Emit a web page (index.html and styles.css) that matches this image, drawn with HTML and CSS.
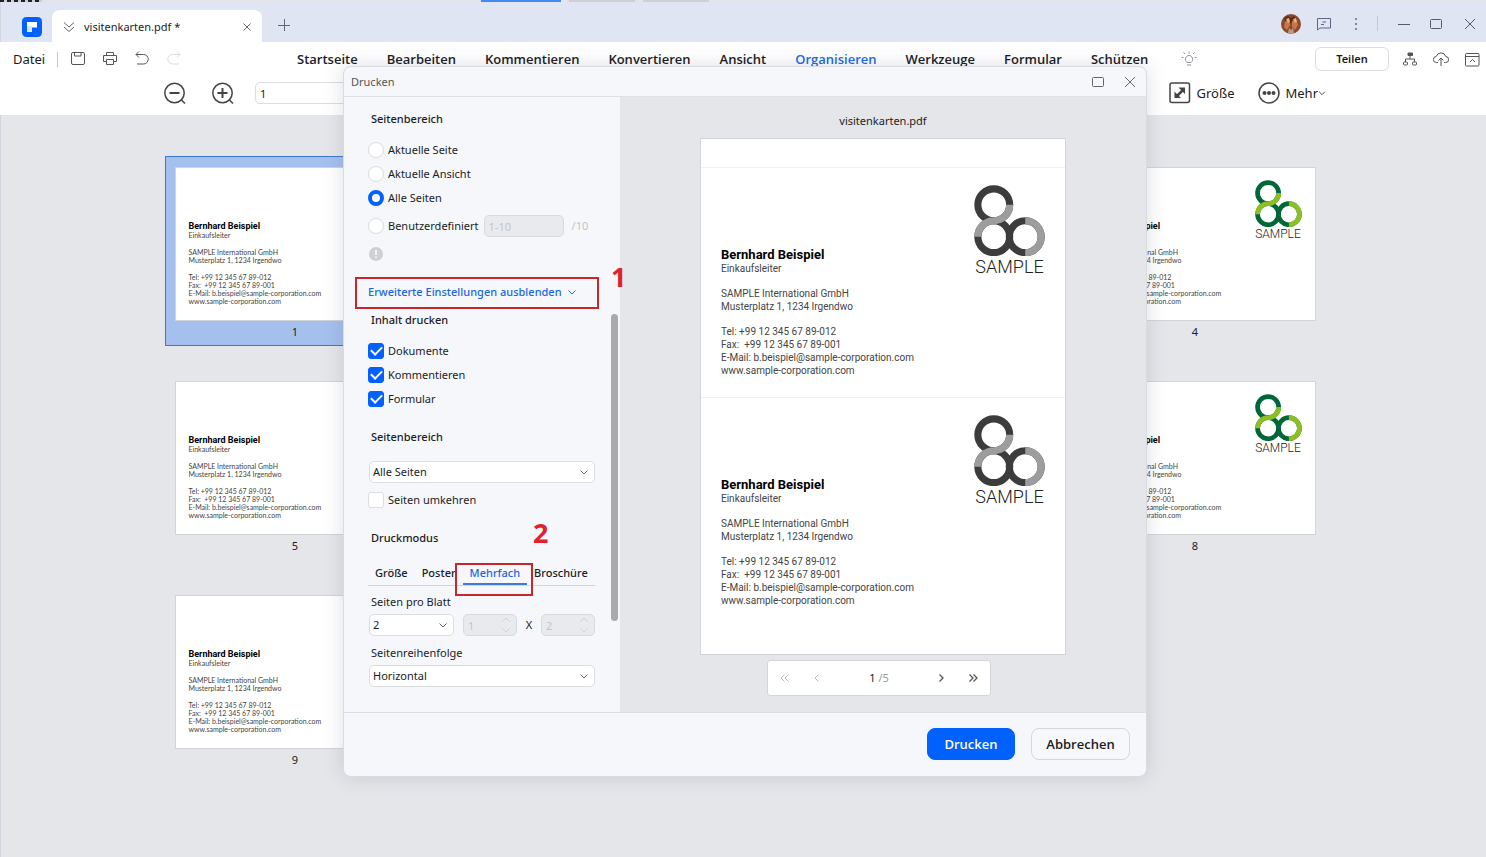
FILE: index.html
```html
<!DOCTYPE html>
<html lang="de">
<head>
<meta charset="utf-8">
<title>visitenkarten.pdf</title>
<link rel="stylesheet" href="styles.css">
</head>
<body>
<svg class="defs" width="0" height="0" aria-hidden="true">
  <defs>
    <symbol id="logo" viewBox="0 0 70 70">
      <g fill="none" stroke-width="7">
        <circle cx="19.500" cy="19.500" r="15.700" class="dark"/>
        <circle cx="19.500" cy="51" r="15.700" class="dark"/>
        <circle cx="50.500" cy="51" r="15.700" class="dark"/>
        <path class="light" d="M35.200 19.500a15.700 15.700 0 0 1-15.700 15.750a15.700 15.700 0 0 0-15.700 15.750"/>
        <path class="light" d="M50.500 35.300a15.700 15.700 0 0 1 0 31.400"/>
      </g>
    </symbol>
    <symbol id="chev" viewBox="0 0 10 10"><path d="M1.500 3.500 5 7l3.500-3.500" fill="none" stroke="currentColor"/></symbol>
    <symbol id="spin" viewBox="0 0 10 16"><path d="M1.500 4.500 5 1l3.500 3.500M1.500 11.500 5 15l3.500-3.500" fill="none" stroke="currentColor"/></symbol>
  </defs>
</svg>
<div class="app">
  <div class="behind"><span class="seg seg-text"></span><span class="seg seg-blue"></span><span class="seg seg-grey"></span><span class="seg seg-grey"></span></div>

  <header class="titlebar">
    <svg class="brand" viewBox="0 0 20 20"><rect width="20" height="20" rx="4.500" fill="#0061ff"/><path d="M5 5h10v5.500h-5V9H5z" fill="#fff"/><path d="M5 9h5v6H5z" fill="#d9e8ff"/></svg>
    <div class="tab">
      <svg width="12" height="12" viewBox="0 0 12 12" fill="none" stroke="#666"><path d="M1 1.500 6 6l5-4.500M1 6l5 4.500L11 6"/></svg>
      <span class="tab-name">visitenkarten.pdf *</span>
      <button class="icon-btn" aria-label="Tab schließen"><svg width="8" height="8" viewBox="0 0 8 8" stroke="#667"><path d="m.5.5 7 7m0-7-7 7"/></svg></button>
    </div>
    <button class="icon-btn new-tab" aria-label="Neuer Tab"><svg width="12" height="12" viewBox="0 0 12 12" stroke="#667"><path d="M0 6.500h12M6.500 0v12"/></svg></button>
    <div class="window-tools">
      <svg class="avatar" width="20" height="20" viewBox="0 0 20 20"><circle cx="10" cy="10" r="10" fill="#8b4a2c"/><path d="M3 4l4-2 3 2 3-2 3 3-2 3-4 1-5-1z" fill="#5a2a1d"/><path d="M4 8l4-3 1 6-3 5-3-3zM11 7l4-2 2 6-3 5-3-3z" fill="#c9764a"/><path d="M8 14l2 2 2-2 1 5-3 1-3-1z" fill="#b99c86"/><path d="M5 5l3-1 1 4-2 1zM12 5l3-1 1 4-2 1z" fill="#e9b07a"/></svg>
      <button class="icon-btn" aria-label="Feedback"><svg width="14" height="14" viewBox="0 0 14 14" fill="none" stroke="#626780"><path d="M.5 1.500h13v9.500H3L.5 13zM4 7.500h3M5.500 5H9"/></svg></button>
      <button class="icon-btn" aria-label="Menü"><svg width="4" height="14" viewBox="0 0 4 14" fill="#626780"><circle cx="2" cy="2" r="1"/><circle cx="2" cy="7" r="1"/><circle cx="2" cy="12" r="1"/></svg></button>
      <span class="rule"></span>
      <button class="icon-btn" aria-label="Minimieren"><svg width="12" height="12" viewBox="0 0 12 12" stroke="#555a70"><path d="M0 6.500h12"/></svg></button>
      <button class="icon-btn" aria-label="Maximieren"><svg width="12" height="12" viewBox="0 0 12 12" fill="none" stroke="#555a70"><rect x=".5" y="1.500" width="11" height="9" rx="1"/></svg></button>
      <button class="icon-btn close" aria-label="Schließen"><svg width="12" height="12" viewBox="0 0 12 12" stroke="#555a70"><path d="m1 1 10 10m0-10L1 11"/></svg></button>
    </div>
  </header>

  <nav class="menubar">
    <div class="quick">
      <a href="#" class="datei">Datei</a><span class="rule"></span>
      <button class="icon-btn" aria-label="Speichern"><svg width="16" height="16" viewBox="0 0 16 16" fill="none" stroke="#555"><rect x="1.500" y="1.500" width="13" height="12" rx="1.500"/><path d="M4.500 1.500V5H11V1.500"/></svg></button>
      <button class="icon-btn" aria-label="Drucken"><svg width="16" height="16" viewBox="0 0 16 16" fill="none" stroke="#555"><path d="M4.500 4.500v-3h7v3M4.500 10.500h-3v-6h13v6h-3M4.500 8.500h7v5h-7z"/></svg></button>
      <button class="icon-btn" aria-label="Rückgängig"><svg width="16" height="16" viewBox="0 0 16 16" fill="none" stroke="#555"><path d="M5 .5 2 3.500l3 3M2 3.500h7.500a4.700 4.700 0 0 1 0 9.500H3"/></svg></button>
      <button class="icon-btn" aria-label="Wiederholen"><svg width="16" height="16" viewBox="0 0 16 16" fill="none" stroke="#ddd"><path d="m11 .5 3 3-3 3M14 3.500H6.500a4.700 4.700 0 0 0 0 9.500H13"/></svg></button>
    </div>
    <div class="menus">
      <a href="#">Startseite</a><a href="#">Bearbeiten</a><a href="#">Kommentieren</a><a href="#">Konvertieren</a><a href="#">Ansicht</a><a href="#" class="active">Organisieren</a><a href="#">Werkzeuge</a><a href="#">Formular</a><a href="#">Schützen</a>
      <svg width="16" height="16" viewBox="0 0 16 16" fill="none" stroke="#8d92a3"><path d="M6 11.500C3 9 4.500 4.500 8 4.500s5 4.500 2 7zM6 14h4M8 .5v2M.5 6.500h2M13.500 6.500h2M2.500 1.500 4 3M13.500 1.500 12 3"/></svg>
    </div>
    <div class="share">
      <button class="teilen">Teilen</button>
      <button class="icon-btn" aria-label="Struktur"><svg width="14" height="14" viewBox="0 0 14 14" fill="none" stroke="#555"><path d="M5 1h4.500v2.500H5z" fill="#555"/><path d="M7 4v3M2.500 10V7h9v3"/><rect x=".5" y="10" width="4" height="3" rx="1"/><rect x="9.500" y="10" width="4" height="3" rx="1"/></svg></button>
      <button class="icon-btn" aria-label="Cloud"><svg width="16" height="16" viewBox="0 0 16 16" fill="none" stroke="#555"><path d="M5 11.500H3.500a3 3 0 0 1-.3-6 5 5 0 0 1 9.600 0 3 3 0 0 1-.3 6H11M8 15V7M5.500 9.500 8 7l2.500 2.500"/></svg></button>
      <button class="icon-btn" aria-label="Menüband einklappen"><svg width="15" height="15" viewBox="0 0 15 15" fill="none" stroke="#555"><rect x=".5" y="1.500" width="13.500" height="12.500" rx="1"/><path d="M.5 4.500H14M5 10l2.500-2.500L10 10"/></svg></button>
    </div>
  </nav>

  <div class="toolbar">
    <div class="tools-left">
      <button class="icon-btn" aria-label="Verkleinern"><svg width="24" height="24" viewBox="0 0 24 24" fill="none" stroke="#444" stroke-width="1.500"><circle cx="11.500" cy="12" r="9.700"/><path d="m18.500 19 3.500 3.500"/><path d="M6.500 12h10" stroke-width="2"/></svg></button>
      <button class="icon-btn" aria-label="Vergrößern"><svg width="24" height="24" viewBox="0 0 24 24" fill="none" stroke="#444" stroke-width="1.500"><circle cx="11.500" cy="12" r="9.700"/><path d="m18.500 19 3.500 3.500"/><path d="M6.500 12h10M11.500 7v10" stroke-width="2"/></svg></button>
      <input class="page-input" value="1" aria-label="Seite">
    </div>
    <div class="tools-right">
      <button class="tool"><svg width="22" height="22" viewBox="0 0 22 22" fill="none" stroke="#444" stroke-width="1.500"><rect x="1" y="1" width="19.500" height="19.500" rx="2"/><path d="m8 14 6-6" stroke-width="2.500"/><path d="M9.500 5.500H16V12zM5.500 9.500V16H12z" fill="#444" stroke="none"/></svg>Größe</button>
      <button class="tool"><svg width="22" height="22" viewBox="0 0 22 22" fill="none" stroke="#444" stroke-width="1.500"><circle cx="11" cy="11" r="10"/><g fill="#444" stroke="none"><circle cx="6.500" cy="11" r="2"/><circle cx="11" cy="11" r="2"/><circle cx="15.500" cy="11" r="2"/></g></svg><span>Mehr<svg class="mini" width="8" height="8"><use href="#chev"/></svg></span></button>
    </div>
  </div>

  <main class="workspace">
    <ul class="pages">
      <li class="page selected"><div class="card"><div class="card-text"><p><b>Bernhard Beispiel</b><br>Einkaufsleiter</p><p>SAMPLE International GmbH<br>Musterplatz 1, 1234 Irgendwo</p><p>Tel: +99 12 345 67 89-012<br>Fax:&nbsp; +99 12 345 67 89-001<br>E-Mail: b.beispiel@sample-corporation.com<br>www.sample-corporation.com</p></div></div>1</li>
      <li class="page last"><div class="card"><div class="card-text"><p><b>Bernhard Beispiel</b><br>Einkaufsleiter</p><p>SAMPLE International GmbH<br>Musterplatz 1, 1234 Irgendwo</p><p>Tel: +99 12 345 67 89-012<br>Fax:&nbsp; +99 12 345 67 89-001<br>E-Mail: b.beispiel@sample-corporation.com<br>www.sample-corporation.com</p></div><div class="card-logo"><svg class="green"><use href="#logo"/></svg>SAMPLE</div></div>4</li>
      <li class="page"><div class="card"><div class="card-text"><p><b>Bernhard Beispiel</b><br>Einkaufsleiter</p><p>SAMPLE International GmbH<br>Musterplatz 1, 1234 Irgendwo</p><p>Tel: +99 12 345 67 89-012<br>Fax:&nbsp; +99 12 345 67 89-001<br>E-Mail: b.beispiel@sample-corporation.com<br>www.sample-corporation.com</p></div></div>5</li>
      <li class="page last"><div class="card"><div class="card-text"><p><b>Bernhard Beispiel</b><br>Einkaufsleiter</p><p>SAMPLE International GmbH<br>Musterplatz 1, 1234 Irgendwo</p><p>Tel: +99 12 345 67 89-012<br>Fax:&nbsp; +99 12 345 67 89-001<br>E-Mail: b.beispiel@sample-corporation.com<br>www.sample-corporation.com</p></div><div class="card-logo"><svg class="green"><use href="#logo"/></svg>SAMPLE</div></div>8</li>
      <li class="page"><div class="card"><div class="card-text"><p><b>Bernhard Beispiel</b><br>Einkaufsleiter</p><p>SAMPLE International GmbH<br>Musterplatz 1, 1234 Irgendwo</p><p>Tel: +99 12 345 67 89-012<br>Fax:&nbsp; +99 12 345 67 89-001<br>E-Mail: b.beispiel@sample-corporation.com<br>www.sample-corporation.com</p></div></div>9</li>
    </ul>
  </main>

  <div class="overlay">
    <section class="dialog" role="dialog" aria-label="Drucken">
      <div class="dialog-title">
        <span>Drucken</span>
        <button class="icon-btn" aria-label="Maximieren"><svg width="12" height="12" viewBox="0 0 12 12" fill="none" stroke="#666"><rect x=".5" y="1.500" width="11" height="9" rx="1"/></svg></button>
        <button class="icon-btn" aria-label="Schließen"><svg width="12" height="12" viewBox="0 0 12 12" stroke="#666"><path d="m1 1 10 10m0-10L1 11"/></svg></button>
      </div>
      <div class="dialog-body">
        <form class="settings">
          <h3>Seitenbereich</h3>
          <div class="choices">
            <label class="choice"><input type="radio" name="r">Aktuelle Seite</label>
            <label class="choice"><input type="radio" name="r">Aktuelle Ansicht</label>
            <label class="choice"><input type="radio" name="r" checked>Alle Seiten</label>
          </div>
          <div class="custom">
            <label class="choice"><input type="radio" name="r">Benutzerdefiniert</label>
            <input class="field range" placeholder="1-10" disabled aria-label="Bereich"><span>/10</span>
          </div>
          <div class="info"><svg width="14" height="14" viewBox="0 0 14 14"><circle cx="7" cy="7" r="7" fill="#cfd0d3"/><path d="M7 3v5M7 9.500v1.500" stroke="#fff" stroke-width="1.500"/></svg></div>
          <a href="#" class="advanced">Erweiterte Einstellungen ausblenden<svg width="10" height="10"><use href="#chev"/></svg></a>
          <h3 class="tight">Inhalt drucken</h3>
          <div class="choices">
            <label class="choice"><input type="checkbox" checked>Dokumente</label>
            <label class="choice"><input type="checkbox" checked>Kommentieren</label>
            <label class="choice"><input type="checkbox" checked>Formular</label>
          </div>
          <h3>Seitenbereich</h3>
          <div class="select first"><select aria-label="Seitenbereich"><option>Alle Seiten</option></select><svg width="10" height="10"><use href="#chev"/></svg></div>
          <label class="choice reverse"><input type="checkbox">Seiten umkehren</label>
          <h3>Druckmodus</h3>
          <div class="modes"><button type="button">Größe</button><button type="button">Poster</button><button type="button" class="on">Mehrfach</button><button type="button">Broschüre</button></div>
          <label class="caption" for="per">Seiten pro Blatt</label>
          <div class="sheet">
            <div class="select"><select id="per"><option>2</option></select><svg width="10" height="10"><use href="#chev"/></svg></div>
            <div class="select off"><input class="field" value="1" disabled aria-label="Spalten"><svg width="10" height="16"><use href="#spin"/></svg></div>
            <span>X</span>
            <div class="select off"><input class="field" value="2" disabled aria-label="Zeilen"><svg width="10" height="16"><use href="#spin"/></svg></div>
          </div>
          <label class="caption order" for="order">Seitenreihenfolge</label>
          <div class="select"><select id="order"><option>Horizontal</option></select><svg width="10" height="10"><use href="#chev"/></svg></div>
          <span class="scroll-thumb"></span>
        </form>
        <div class="preview">
          <div class="file">visitenkarten.pdf</div>
          <div class="sheet-preview">
            <div class="big"><div class="card-text"><p><b>Bernhard Beispiel</b><br>Einkaufsleiter</p><p>SAMPLE International GmbH<br>Musterplatz 1, 1234 Irgendwo</p><p>Tel: +99 12 345 67 89-012<br>Fax:&nbsp; +99 12 345 67 89-001<br>E-Mail: b.beispiel@sample-corporation.com<br>www.sample-corporation.com</p></div><div class="card-logo"><svg class="gray"><use href="#logo"/></svg>SAMPLE</div></div>
            <div class="big"><div class="card-text"><p><b>Bernhard Beispiel</b><br>Einkaufsleiter</p><p>SAMPLE International GmbH<br>Musterplatz 1, 1234 Irgendwo</p><p>Tel: +99 12 345 67 89-012<br>Fax:&nbsp; +99 12 345 67 89-001<br>E-Mail: b.beispiel@sample-corporation.com<br>www.sample-corporation.com</p></div><div class="card-logo"><svg class="gray"><use href="#logo"/></svg>SAMPLE</div></div>
          </div>
          <div class="pager">
            <button class="icon-btn" aria-label="Erste"><svg width="10" height="10" viewBox="0 0 10 10" fill="none" stroke="#bbb"><path d="M4.500 1.500 1 5l3.500 3.500M8.500 1.500 5 5l3.500 3.500"/></svg></button>
            <button class="icon-btn" aria-label="Zurück"><svg width="10" height="10" viewBox="0 0 10 10" fill="none" stroke="#bbb"><path d="M6.500 1.500 3 5l3.500 3.500"/></svg></button>
            <span class="count">1 <i>/5</i></span>
            <button class="icon-btn" aria-label="Weiter"><svg width="10" height="10" viewBox="0 0 10 10" fill="none" stroke="#555" stroke-width="1.300"><path d="M3.500 1.500 7 5 3.500 8.500"/></svg></button>
            <button class="icon-btn" aria-label="Letzte"><svg width="10" height="10" viewBox="0 0 10 10" fill="none" stroke="#555" stroke-width="1.300"><path d="M1.500 1.500 5 5 1.500 8.500M5.500 1.500 9 5 5.500 8.500"/></svg></button>
          </div>
        </div>
      </div>
      <div class="dialog-foot"><button class="btn primary">Drucken</button><button class="btn">Abbrechen</button></div>
      <span class="mark mark-a"></span><span class="num num-a">1</span>
      <span class="mark mark-b"></span><span class="num num-b">2</span>
    </section>
  </div>
</div>
</body>
</html>
```
FILE: styles.css
```css
* { box-sizing: border-box; }
body { margin: 0; font: 11px/16px "Noto Sans", "Open Sans", sans-serif; color: #1b1c1f; }
button, input, select { font: inherit; color: inherit; }
a { color: inherit; text-decoration: none; }
svg { display: block; flex: none; }
p { margin: 0; }
.defs { position: absolute; }
.app { position: relative; display: flex; flex-direction: column; min-height: 100vh; }
.icon-btn { display: flex; justify-content: center; align-items: center; padding: 0; border: 0; background: none; flex: none; }
.rule { width: 1px; height: 15px; background: #c5c8d2; flex: none; }

.behind { display: flex; height: 2px; background: #e3e4e5; }
.seg-text { width: 42px; background: repeating-linear-gradient(90deg, #222 0 4px, #ccc 4px 7px); }
.seg-blue { width: 80px; margin-left: 439px; background: #3f8cf0; }
.seg-grey { width: 66px; margin-left: 8px; background: #cfd0d1; }

.titlebar { display: flex; align-items: center; height: 40px; background: #e0e5f4; border-left: 1px solid #d2d5de; padding-right: 10px; }
.brand { width: 20px; height: 20px; margin: 9px 10px 0 21px; }
.tab { display: flex; align-items: center; align-self: flex-end; width: 210px; height: 32px; padding: 2px 11px 0; background: #fff; border-radius: 8px 8px 0 0; }
.tab-name { flex: 1; margin-left: 9px; }
.new-tab { width: 20px; height: 20px; margin-left: 12px; margin-top: 6px; }
.window-tools { display: flex; align-items: center; gap: 20px; margin-left: auto; margin-top: 3px; }
.window-tools .icon-btn { width: 12px; height: 20px; }
.window-tools .avatar { margin-right: -3px; }
.window-tools .rule { margin-left: -5px; }
.window-tools .close { margin-left: 2px; }

.menubar { display: flex; align-items: center; height: 34px; background: #fff; padding: 0 6px 0 13px; }
.quick { display: flex; align-items: center; width: 284px; gap: 16px; }
.datei { font-size: 13px; margin-right: -4px; }
.quick .rule { margin-right: -4px; }
.menus { display: flex; gap: 29px; align-items: center; font-family: "Open Sans", sans-serif; font-size: 13px; font-weight: 600; white-space: nowrap; }
.menus svg { margin-left: 4px; }
.menus .active { color: #1a6be6; }
.share { display: flex; align-items: center; gap: 16px; margin-left: auto; }
.teilen { width: 74px; height: 24px; padding: 0; margin-right: -2px; border: 1px solid #dcdde0; border-radius: 6px; background: #fff; font-weight: 600; }

.toolbar { display: flex; justify-content: space-between; height: 39px; padding: 0 160px 0 163px; background: #fff; }
.tools-left, .tools-right, .tool { display: flex; align-items: center; }
.tools-left, .tools-right { gap: 24px; margin-bottom: 5px; }
.page-input { width: 160px; height: 22px; margin-left: -4px; padding: 0 4px; border: 1px solid #dcdde0; border-radius: 5px; background: #fff; }
.tool { gap: 5px; padding: 0; border: 0; background: none; font-size: 13px; }
.tool span { display: flex; align-items: center; }

.workspace { flex: 1; padding: 41px 0 0 2px; background: #e5e6ea; border-left: 1px solid #d2d5de; }
.pages { display: grid; grid-template-columns: repeat(4, 260px); column-gap: 40px; row-gap: 24px; justify-content: center; margin: 0; padding: 0; list-style: none; }
.page { grid-column: 1; height: 190px; padding: 10px 8px 0 9px; border: 1px solid transparent; text-align: center; }
.page.last { grid-column: 4; }
.page.selected { background: #a6c0ee; border-color: #3c78d2; }
.card { display: flex; justify-content: space-between; height: 154px; margin-bottom: 3px; background: #fff; border: 1px solid #d3d4d9; text-align: left; }
.card-text { font-family: Roboto, sans-serif; color: #444; white-space: nowrap; }
.card-text b { color: #000; line-height: 1; }
.card .card-text { padding: 54px 0 0 13px; font-family: Lato, sans-serif; font-size: 7px; line-height: 8px; }
.card .card-text b { font-family: Roboto, sans-serif; font-size: 9px; }
.card p + p { margin-top: 9px; }
.card-logo { display: flex; flex-direction: column; align-items: center; font-family: Roboto, sans-serif; font-weight: 300; color: #222; }
.card .card-logo { width: 60px; margin-left: -60px; padding: 12px 13px 0 0; font-size: 12px; line-height: 14px; }
.card .card-logo svg { width: 47px; height: 47px; }
.gray { --d: #3c3c3c; --l: #9d9d9d; }
.green { --d: #006838; --l: #8fbe22; }
.dark { stroke: var(--d); }
.light { stroke: var(--l); }

.overlay { position: absolute; inset: 66px 0 auto 4px; display: flex; justify-content: center; }
.dialog { position: relative; width: 804px; border: 1px solid #d9dbe0; border-radius: 8px; background: #f5f7fb; box-shadow: 0 0 20px rgba(60, 70, 100, .18); }
.dialog-title { display: flex; align-items: center; height: 30px; padding: 0 10px 0 7px; gap: 20px; border-bottom: 1px solid #dee0e5; color: #555; }
.dialog-title span { flex: 1; }
.dialog-body { display: flex; height: 616px; border-bottom: 1px solid #dcdee3; }
.settings { position: relative; width: 276px; padding: 10px 25px 0 24px; }
h3 { margin: 14px 0 0 3px; font-size: 11px; line-height: 24px; font-weight: 500; }
h3:first-child { margin-top: 0; }
h3.tight { margin-top: 4px; }
.choices { margin-top: 7px; }
.choice { display: flex; align-items: center; height: 24px; gap: 4px; }
.choice input { appearance: none; width: 16px; height: 16px; margin: 0; border: 1px solid #dcdde1; background: #fff; flex: none; }
.choice input[type=radio] { border-radius: 50%; }
.choice input[type=radio]:checked { border: 4px solid #0061ff; }
.choice input[type=checkbox] { border-radius: 3px; }
.choice input[type=checkbox]:checked { border-color: #0061ff; background: #0061ff; display: grid; place-items: center; }
.choice input[type=checkbox]:checked::before { content: ""; width: 9px; height: 5px; margin-bottom: 3px; border: solid #fff; border-width: 0 0 2px 2px; transform: rotate(-45deg); }
.custom { display: flex; align-items: center; margin-top: 4px; gap: 5px; color: #c3c4c8; }
.custom .choice { color: #1b1c1f; }
.custom span { margin-left: 3px; }
.field { width: 100%; height: 22px; padding: 0 4px; border: 1px solid #d8dade; border-radius: 5px; background: #e9eaee; color: #c3c4c8; }
.field::placeholder { color: #c3c4c8; }
.range { width: 80px; }
.info { display: flex; align-items: center; height: 24px; margin: 4px 0 0 1px; }
.advanced { display: flex; align-items: center; height: 24px; margin-top: 14px; gap: 5px; color: #1a66e0; font-weight: 500; white-space: nowrap; }
.select { position: relative; margin-left: 1px; }
.select.first { margin-top: 12px; }
.select select { display: block; appearance: none; width: 100%; height: 22px; padding: 0 3px; border: 1px solid #dcdde1; border-radius: 5px; background: #fff; }
.select svg { position: absolute; right: 6px; top: 6px; color: #666; pointer-events: none; }
.select.off svg { top: 3px; color: #d0d1d5; }
.reverse { margin-top: 5px; }
.modes { display: flex; margin-top: 11px; border-bottom: 1px solid #d3d5da; }
.modes button { height: 24px; padding: 0 7px; border: 0; background: none; font-weight: 500; }
.modes .on { color: #1a66e0; border-bottom: 2px solid #3f7ad6; padding-top: 2px; }
.caption { display: block; margin: 4px 0 0 3px; line-height: 24px; }
.caption.order { margin-top: 5px; }
.sheet { display: grid; grid-template-columns: 95px 54px 1fr 54px; align-items: center; text-align: center; }
.sheet .select { margin-left: 0; }
.sheet .select:first-child { margin: 0 9px 0 1px; }
.scroll-thumb { position: absolute; right: 2px; top: 217px; width: 7px; height: 307px; border-radius: 4px; background: #a9aaac; }

.preview { flex: 1; display: flex; flex-direction: column; align-items: center; padding-top: 12px; background: #e5e6ea; }
.file { line-height: 24px; }
.sheet-preview { width: 366px; height: 517px; margin-top: 5px; padding-top: 28px; background: #fff; border: 1px solid #d3d4d9; }
.big { display: flex; justify-content: space-between; height: 230px; padding: 17px 20px 0 20px; border-top: 1px solid #f0f0f1; }
.big .card-text { padding-top: 63px; font-size: 10px; line-height: 13px; }
.big .card-text b { font-size: 13px; }
.big p + p { margin-top: 12px; }
.big .card-logo { width: 71px; font-size: 18px; line-height: 22px; }
.big .card-logo svg { width: 71px; height: 71px; }
.pager { display: flex; align-items: center; gap: 22px; width: 224px; height: 36px; margin: 5px 8px 0 0; padding: 0 12px; border: 1px solid #d3d5da; border-radius: 3px; background: #fff; }
.pager .count { flex: 1; text-align: center; }
.pager i { font-style: normal; color: #999; }
.dialog-foot { display: flex; align-items: center; justify-content: flex-end; gap: 16px; height: 63px; padding: 0 16px 2px 0; }
.btn { width: 99px; height: 32px; padding: 0; border: 1px solid #d5d7dc; border-radius: 8px; background: #f7f8fb; font-family: "Open Sans", sans-serif; font-size: 13px; font-weight: 600; }
.btn.primary { width: 88px; border-color: #0061ff; background: #0061ff; color: #fff; }
.mark { position: absolute; border: 2px solid #c9252d; pointer-events: none; }
.mark-a { left: 11px; top: 210px; width: 244px; height: 32px; }
.mark-b { left: 111px; top: 496px; width: 78px; height: 33px; }
.num { position: absolute; font-size: 27px; font-weight: 700; line-height: 30px; color: #e0222a; }
.num-a { left: 267px; top: 195px; }
.num-b { left: 189px; top: 451px; }
```
